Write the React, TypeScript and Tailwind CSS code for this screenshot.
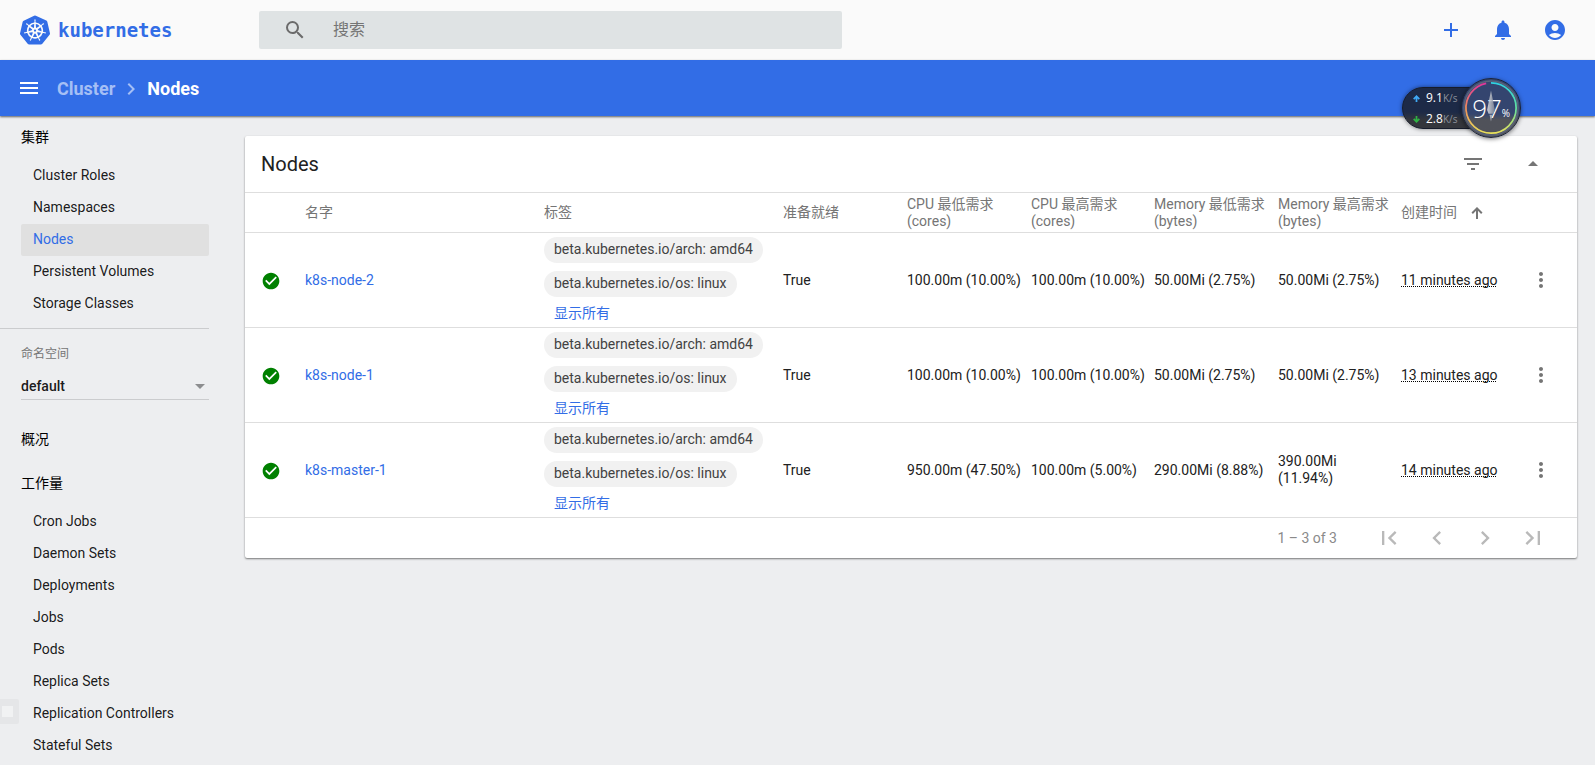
import {
  MdAccountCircle,
  MdAdd,
  MdArrowDropDown,
  MdArrowDropUp,
  MdCheckCircle,
  MdChevronLeft,
  MdChevronRight,
  MdFilterList,
  MdFirstPage,
  MdLastPage,
  MdMenu,
  MdMoreVert,
  MdNotifications,
  MdSearch,
} from "react-icons/md";
import { SiKubernetes } from "react-icons/si";
import type { ReactNode } from "react";

const clusterItems = ["Cluster Roles", "Namespaces", "Nodes", "Persistent Volumes", "Storage Classes"];

const workloadItems = [
  "Cron Jobs",
  "Daemon Sets",
  "Deployments",
  "Jobs",
  "Pods",
  "Replica Sets",
  "Replication Controllers",
  "Stateful Sets",
];

const nodeLabels = ["beta.kubernetes.io/arch: amd64", "beta.kubernetes.io/os: linux"];

interface NodeRow {
  name: string;
  ready: string;
  cells: string[];
  created: string;
}

const nodes: NodeRow[] = [
  {
    name: "k8s-node-2",
    ready: "True",
    cells: ["100.00m (10.00%)", "100.00m (10.00%)", "50.00Mi (2.75%)", "50.00Mi (2.75%)"],
    created: "11 minutes ago",
  },
  {
    name: "k8s-node-1",
    ready: "True",
    cells: ["100.00m (10.00%)", "100.00m (10.00%)", "50.00Mi (2.75%)", "50.00Mi (2.75%)"],
    created: "13 minutes ago",
  },
  {
    name: "k8s-master-1",
    ready: "True",
    cells: ["950.00m (47.50%)", "100.00m (5.00%)", "290.00Mi (8.88%)", "390.00Mi (11.94%)"],
    created: "14 minutes ago",
  },
];

const headers = [
  "名字",
  "标签",
  "准备就绪",
  "CPU 最低需求 (cores)",
  "CPU 最高需求 (cores)",
  "Memory 最低需求 (bytes)",
  "Memory 最高需求 (bytes)",
];

const rowGrid =
  "grid grid-cols-[60px_minmax(0,239fr)_minmax(0,239fr)_minmax(0,124fr)_minmax(0,124fr)_minmax(0,123fr)_minmax(0,124fr)_minmax(0,123fr)_minmax(0,122fr)_54px] items-center border-t border-[#dedede]";

function IconButton({ label, children }: { label: string; children: ReactNode }) {
  return (
    <button type="button" aria-label={label} className="flex size-10 items-center justify-center">
      {children}
    </button>
  );
}

function Header() {
  return (
    <header className="flex h-[60px] items-center bg-[#fafafa] px-5">
      <a href="#home" className="flex w-[239px] shrink-0 items-center gap-2 text-[#326de6]">
        <SiKubernetes className="size-[30px]" />
        <span className="font-['DejaVu_Sans_Mono',monospace] text-[19px] leading-6 font-bold">kubernetes</span>
      </a>
      <form role="search" className="flex h-[38px] w-[583px] items-center gap-[26px] rounded-xs bg-[#dfe3e4] pl-6">
        <MdSearch className="size-6 shrink-0 text-[#6b6b6b]" />
        <input
          type="text"
          aria-label="搜索"
          placeholder="搜索"
          className="min-w-0 flex-1 bg-transparent text-base outline-none placeholder:text-[#757575]"
        />
      </form>
      <div className="ml-auto flex gap-3 text-[#326de6]">
        <IconButton label="Create">
          <MdAdd className="size-6" />
        </IconButton>
        <IconButton label="Notifications">
          <MdNotifications className="size-6" />
        </IconButton>
        <IconButton label="Account">
          <MdAccountCircle className="size-6" />
        </IconButton>
      </div>
    </header>
  );
}

function Toolbar() {
  return (
    <div className="relative flex h-14 items-center bg-[#326de6] px-[17px] text-lg font-bold text-white shadow-[0_1px_2px_rgba(0,0,0,0.6)]">
      <button type="button" aria-label="Menu">
        <MdMenu className="size-6" />
      </button>
      <nav aria-label="Breadcrumb" className="ml-4 flex items-center pt-0.5">
        <a href="#cluster" className="text-[#a5bff5]">
          Cluster
        </a>
        <MdChevronRight className="mx-1 size-6 text-[#a5bff5]" />
        <span>Nodes</span>
      </nav>
    </div>
  );
}

function NavGroup({ title, items, active }: { title: string; items: string[]; active?: string }) {
  return (
    <section>
      <h2 className="flex h-11 items-center pb-0.5 text-sm font-normal text-black">{title}</h2>
      <ul>
        {items.map((item) => (
          <li key={item}>
            <a
              href={"#" + item.toLowerCase().replace(" ", "-")}
              className={
                item === active
                  ? "flex h-8 items-center rounded-xs bg-[#e0e0e0] px-3 pb-0.5 text-sm text-[#326de6]"
                  : "flex h-8 items-center px-3 pb-0.5 text-sm"
              }
            >
              {item}
            </a>
          </li>
        ))}
      </ul>
    </section>
  );
}

function Sidebar() {
  return (
    <aside className="w-[209px] shrink-0 pl-[21px] text-black/90">
      <NavGroup title="集群" items={clusterItems} active="Nodes" />
      <hr className="mt-2 -ml-[21px] border-[#cbccce]" />
      <div className="mt-[17px]">
        <label htmlFor="namespace" className="block text-xs leading-4 text-[#757575]">
          命名空间
        </label>
        <div className="relative mt-[9px] border-b border-[#cbccce]">
          <select id="namespace" className="h-7 w-full appearance-none bg-transparent pt-0.5 text-sm font-medium outline-none">
            <option>default</option>
          </select>
          <MdArrowDropDown className="pointer-events-none absolute top-[3px] right-[-3px] size-6 text-[#8c8d8f]" />
        </div>
      </div>
      <div className="mt-[18px]">
        <NavGroup title="概况" items={[]} />
        <NavGroup title="工作量" items={workloadItems} />
      </div>
    </aside>
  );
}

function NodesTable() {
  return (
    <table className="block text-sm leading-[17px] text-[#212121]">
      <thead className="block">
        <tr className={rowGrid + " h-10 text-left text-[#757575]"}>
          <th aria-label="Status" />
          {headers.map((h) => (
            <th key={h} className="pr-2 font-normal">
              {h}
            </th>
          ))}
          <th className="font-normal" aria-sort="ascending">
            <button type="button" className="flex items-center gap-[14px]">
              创建时间
              <svg viewBox="0 0 12 12" className="size-3" fill="none" stroke="currentColor" strokeWidth="2">
                <path d="M6 12V1.500M1.200 6.200L6 1.400l4.800 4.800" />
              </svg>
            </button>
          </th>
          <th aria-label="Actions" />
        </tr>
      </thead>
      <tbody className="block">
        {nodes.map((node) => (
          <tr key={node.name} className={rowGrid + " h-[95px]"}>
            <td className="pt-0.5 pl-4">
              <MdCheckCircle className="size-5 text-[#008000]" />
            </td>
            <td>
              <a href={"#" + node.name} className="text-[#326de6]">
                {node.name}
              </a>
            </td>
            <td className="flex flex-col items-start pb-0.5">
              {nodeLabels.map((label) => (
                <span
                  key={label}
                  className="mb-2 flex h-[26px] items-center rounded-full bg-[#f1f1f1] px-2.5 pb-px whitespace-nowrap text-[#424242]"
                >
                  {label}
                </span>
              ))}
              <button type="button" className="px-2.5 leading-4 text-[#326de6]">
                显示所有
              </button>
            </td>
            <td>{node.ready}</td>
            {node.cells.map((cell, i) => (
              <td key={i} className="pr-2">
                {cell}
              </td>
            ))}
            <td>
              <span className="underline decoration-black decoration-dotted decoration-1 underline-offset-1 [text-decoration-skip-ink:none]">
                {node.created}
              </span>
            </td>
            <td>
              <button type="button" aria-label="Actions" className="flex size-9 items-center justify-center text-[#757575]">
                <MdMoreVert className="size-6" />
              </button>
            </td>
          </tr>
        ))}
      </tbody>
    </table>
  );
}

function NodesCard() {
  return (
    <section className="rounded-xs bg-white shadow-[0_1px_2px_rgba(0,0,0,0.5)]">
      <div className="flex h-14 items-center pr-6 pl-4">
        <h1 className="text-xl text-[#212121]">Nodes</h1>
        <div className="ml-auto flex gap-5 text-[#757575]">
          <IconButton label="Filter">
            <MdFilterList className="size-6" />
          </IconButton>
          <IconButton label="Collapse">
            <MdArrowDropUp className="size-6" />
          </IconButton>
        </div>
      </div>
      <NodesTable />
      <div className="flex h-[41px] items-center justify-end border-t border-[#dedede] pr-6 text-[#b9b9b9]">
        <span className="mr-8 text-sm text-[#8a8a8a]">1 – 3 of 3</span>
        <div className="flex gap-2">
          <IconButton label="First page">
            <MdFirstPage className="size-7" />
          </IconButton>
          <IconButton label="Previous page">
            <MdChevronLeft className="size-7" />
          </IconButton>
          <IconButton label="Next page">
            <MdChevronRight className="size-7" />
          </IconButton>
          <IconButton label="Last page">
            <MdLastPage className="size-7" />
          </IconButton>
        </div>
      </div>
    </section>
  );
}

function SpeedRow({ color, down, value }: { color: string; down?: boolean; value: string }) {
  return (
    <div className="flex h-[21px] items-center">
      <svg viewBox="0 0 8 8" className={(down ? "rotate-180 " : "") + "mr-[6px] size-[7px] " + color} fill="none" stroke="currentColor" strokeWidth="2">
        <path d="M4 8V1.400M.8 4.600L4 1.400l3.200 3.200" />
      </svg>
      <span className="pb-0.5 text-xs font-medium text-white">{value}</span>
      <span className="text-[10px] text-[#8b919b]">K/s</span>
    </div>
  );
}

function SpeedMonitor() {
  return (
    <div className="absolute top-[78px] right-[74px] flex items-center font-['Open_Sans','Noto_Sans',sans-serif]">
      <div className="-mr-5 h-[42px] w-[79px] rounded-l-full border border-[#161c2b] bg-linear-to-b from-[#1d2a47] from-60% to-[#34363c] to-80% pl-2.5 shadow-[0_0_4px_rgba(0,0,0,0.5)]">
        <SpeedRow color="text-[#3fa9f5]" value="9.1" />
        <SpeedRow color="text-[#2fb344]" down value="2.8" />
      </div>
      <div className="relative flex size-[60px] items-center justify-center rounded-full border border-[#1c2438] bg-linear-to-b from-[#34456f] from-60% to-[#50525a] to-70% shadow-[0_1px_4px_rgba(0,0,0,0.5)]">
        <svg viewBox="0 0 60 60" className="absolute inset-0 size-full" fill="none">
          <defs>
            <linearGradient id="ringRight" x1="0" y1="0" x2="0" y2="1">
              <stop offset="0" stopColor="#2fd0e0" />
              <stop offset=".5" stopColor="#62dfa0" />
              <stop offset="1" stopColor="#e8e05a" />
            </linearGradient>
            <linearGradient id="ringLeft" x1="0" y1="0" x2="0" y2="1">
              <stop offset="0" stopColor="#e0359b" />
              <stop offset=".5" stopColor="#f0905a" />
              <stop offset="1" stopColor="#e8e05a" />
            </linearGradient>
            <linearGradient id="needle" x1="0" y1="0" x2="1" y2="0">
              <stop offset="0" stopColor="#e4e6ea" />
              <stop offset="1" stopColor="#848a98" />
            </linearGradient>
          </defs>
          <circle cx="30" cy="30" r="28" stroke="#59637a" strokeWidth="1.5" />
          <path d="M30 4a26 26 0 0 1 0 52" stroke="url(#ringRight)" strokeWidth="1.8" />
          <path d="M25 4.500a26 26 0 0 0 5 51.500" stroke="url(#ringLeft)" strokeWidth="1.8" />
        </svg>
        <span className="relative -ml-2 text-[26px] leading-7 font-light text-white">97</span>
        <svg viewBox="0 0 60 60" className="absolute inset-0 size-full">
          <path d="M30 12l4 20-1.500 4h-5l-1.500-4zM28.500 37h3L30 44z" fill="url(#needle)" opacity=".85" />
        </svg>
        <span className="absolute right-[10px] bottom-[18px] text-[10px] leading-3 font-medium text-white">%</span>
      </div>
    </div>
  );
}

export default function App() {
  return (
    <div className="relative h-screen overflow-hidden bg-[#edeef0] font-[Roboto,'Noto_Sans_CJK_SC',sans-serif]">
      <Header />
      <Toolbar />
      <div className="flex gap-9">
        <Sidebar />
        <main className="min-w-0 flex-1 pt-5 pr-[18px]">
          <NodesCard />
        </main>
      </div>
      <SpeedMonitor />
      <div className="absolute top-[699px] left-0 flex h-[25px] w-[19px] items-center rounded-r-xs bg-[#e5e6e8] pl-0.5">
        <div className="size-[11px] bg-[#f1f2f3]" />
      </div>
    </div>
  );
}
